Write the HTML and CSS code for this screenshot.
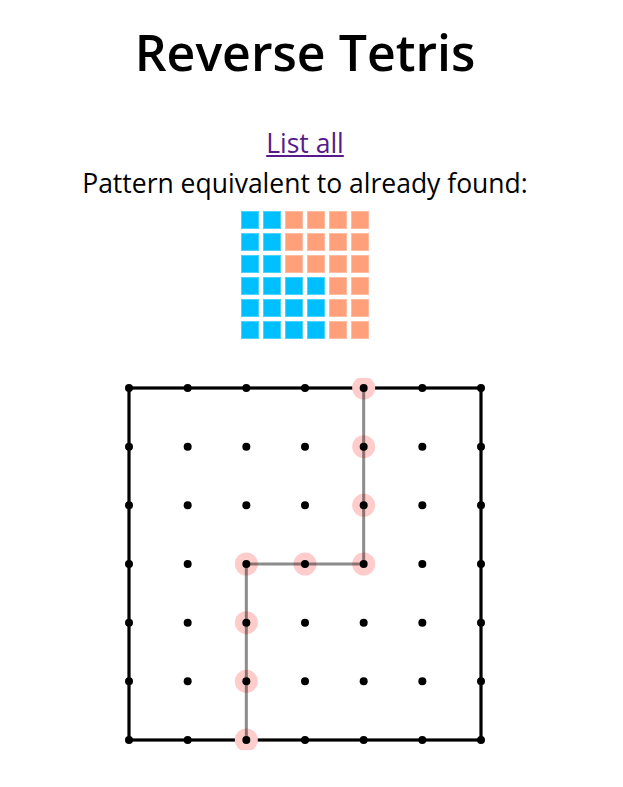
FILE: index.html
```html
<!DOCTYPE html>
<html>
<head>
<meta charset="utf-8">
<link rel="stylesheet" href="styles.css">
</head>
<body>
<div class="page">
  <h1 class="title">Reverse Tetris</h1>
  <a class="list-link" href="#">List all</a>
  <p class="note">Pattern equivalent to already found:</p>
  <div class="pattern">
    <span class="b"></span><span class="b"></span><span class="o"></span><span class="o"></span><span class="o"></span><span class="o"></span>
    <span class="b"></span><span class="b"></span><span class="o"></span><span class="o"></span><span class="o"></span><span class="o"></span>
    <span class="b"></span><span class="b"></span><span class="o"></span><span class="o"></span><span class="o"></span><span class="o"></span>
    <span class="b"></span><span class="b"></span><span class="b"></span><span class="b"></span><span class="o"></span><span class="o"></span>
    <span class="b"></span><span class="b"></span><span class="b"></span><span class="b"></span><span class="o"></span><span class="o"></span>
    <span class="b"></span><span class="b"></span><span class="b"></span><span class="b"></span><span class="o"></span><span class="o"></span>
  </div>
  <svg class="board" width="372" height="372" viewBox="-10 -10 372 372">
    <rect x="0" y="0" width="352" height="352" fill="none" stroke="#000" stroke-width="3.2"/>
    <g fill="#fcc">
      <circle cx="234.67" cy="0" r="11.5"/>
      <circle cx="234.67" cy="58.67" r="11.5"/>
      <circle cx="234.67" cy="117.33" r="11.5"/>
      <circle cx="234.67" cy="176" r="11.5"/>
      <circle cx="176" cy="176" r="11.5"/>
      <circle cx="117.33" cy="176" r="11.5"/>
      <circle cx="117.33" cy="234.67" r="11.5"/>
      <circle cx="117.33" cy="293.33" r="11.5"/>
      <circle cx="117.33" cy="352" r="11.5"/>
    </g>
    <polyline points="234.67,0 234.67,176 117.33,176 117.33,352" fill="none" stroke="rgba(0,0,0,0.45)" stroke-width="3"/>
    <g fill="#000">
      <circle cx="0" cy="0" r="4"/><circle cx="58.67" cy="0" r="4"/><circle cx="117.33" cy="0" r="4"/><circle cx="176" cy="0" r="4"/><circle cx="234.67" cy="0" r="4"/><circle cx="293.33" cy="0" r="4"/><circle cx="352" cy="0" r="4"/>
      <circle cx="0" cy="58.67" r="4"/><circle cx="58.67" cy="58.67" r="4"/><circle cx="117.33" cy="58.67" r="4"/><circle cx="176" cy="58.67" r="4"/><circle cx="234.67" cy="58.67" r="4"/><circle cx="293.33" cy="58.67" r="4"/><circle cx="352" cy="58.67" r="4"/>
      <circle cx="0" cy="117.33" r="4"/><circle cx="58.67" cy="117.33" r="4"/><circle cx="117.33" cy="117.33" r="4"/><circle cx="176" cy="117.33" r="4"/><circle cx="234.67" cy="117.33" r="4"/><circle cx="293.33" cy="117.33" r="4"/><circle cx="352" cy="117.33" r="4"/>
      <circle cx="0" cy="176" r="4"/><circle cx="58.67" cy="176" r="4"/><circle cx="117.33" cy="176" r="4"/><circle cx="176" cy="176" r="4"/><circle cx="234.67" cy="176" r="4"/><circle cx="293.33" cy="176" r="4"/><circle cx="352" cy="176" r="4"/>
      <circle cx="0" cy="234.67" r="4"/><circle cx="58.67" cy="234.67" r="4"/><circle cx="117.33" cy="234.67" r="4"/><circle cx="176" cy="234.67" r="4"/><circle cx="234.67" cy="234.67" r="4"/><circle cx="293.33" cy="234.67" r="4"/><circle cx="352" cy="234.67" r="4"/>
      <circle cx="0" cy="293.33" r="4"/><circle cx="58.67" cy="293.33" r="4"/><circle cx="117.33" cy="293.33" r="4"/><circle cx="176" cy="293.33" r="4"/><circle cx="234.67" cy="293.33" r="4"/><circle cx="293.33" cy="293.33" r="4"/><circle cx="352" cy="293.33" r="4"/>
      <circle cx="0" cy="352" r="4"/><circle cx="58.67" cy="352" r="4"/><circle cx="117.33" cy="352" r="4"/><circle cx="176" cy="352" r="4"/><circle cx="234.67" cy="352" r="4"/><circle cx="293.33" cy="352" r="4"/><circle cx="352" cy="352" r="4"/>
    </g>
  </svg>
</div>
</body>
</html>
```

FILE: styles.css
```css
html, body {
  margin: 0;
  padding: 0;
  background: #fff;
}
.page {
  width: 610px;
  display: flex;
  flex-direction: column;
  align-items: center;
  font-family: "Open Sans", "DejaVu Sans", sans-serif;
  color: #000;
}
.title {
  margin: 20px 0 0;
  font-size: 50px;
  font-weight: 600;
  line-height: 64px;
}
.list-link {
  margin-top: 41px;
  font-size: 26.5px;
  line-height: 36px;
  color: #551a8b;
}
.note {
  margin: 4px 0 0;
  font-size: 26.5px;
  line-height: 36px;
}
.pattern {
  margin-top: 10px;
  display: grid;
  grid-template-columns: repeat(6, 18px);
  grid-auto-rows: 18px;
  gap: 4px;
}
.pattern span {
  box-sizing: border-box;
  border: 1px solid rgba(255, 255, 255, 0.3);
}
.pattern .b { background: #00bfff; }
.pattern .o { background: #ffa07a; }
.board {
  display: block;
  margin-top: 39px;
}
```
